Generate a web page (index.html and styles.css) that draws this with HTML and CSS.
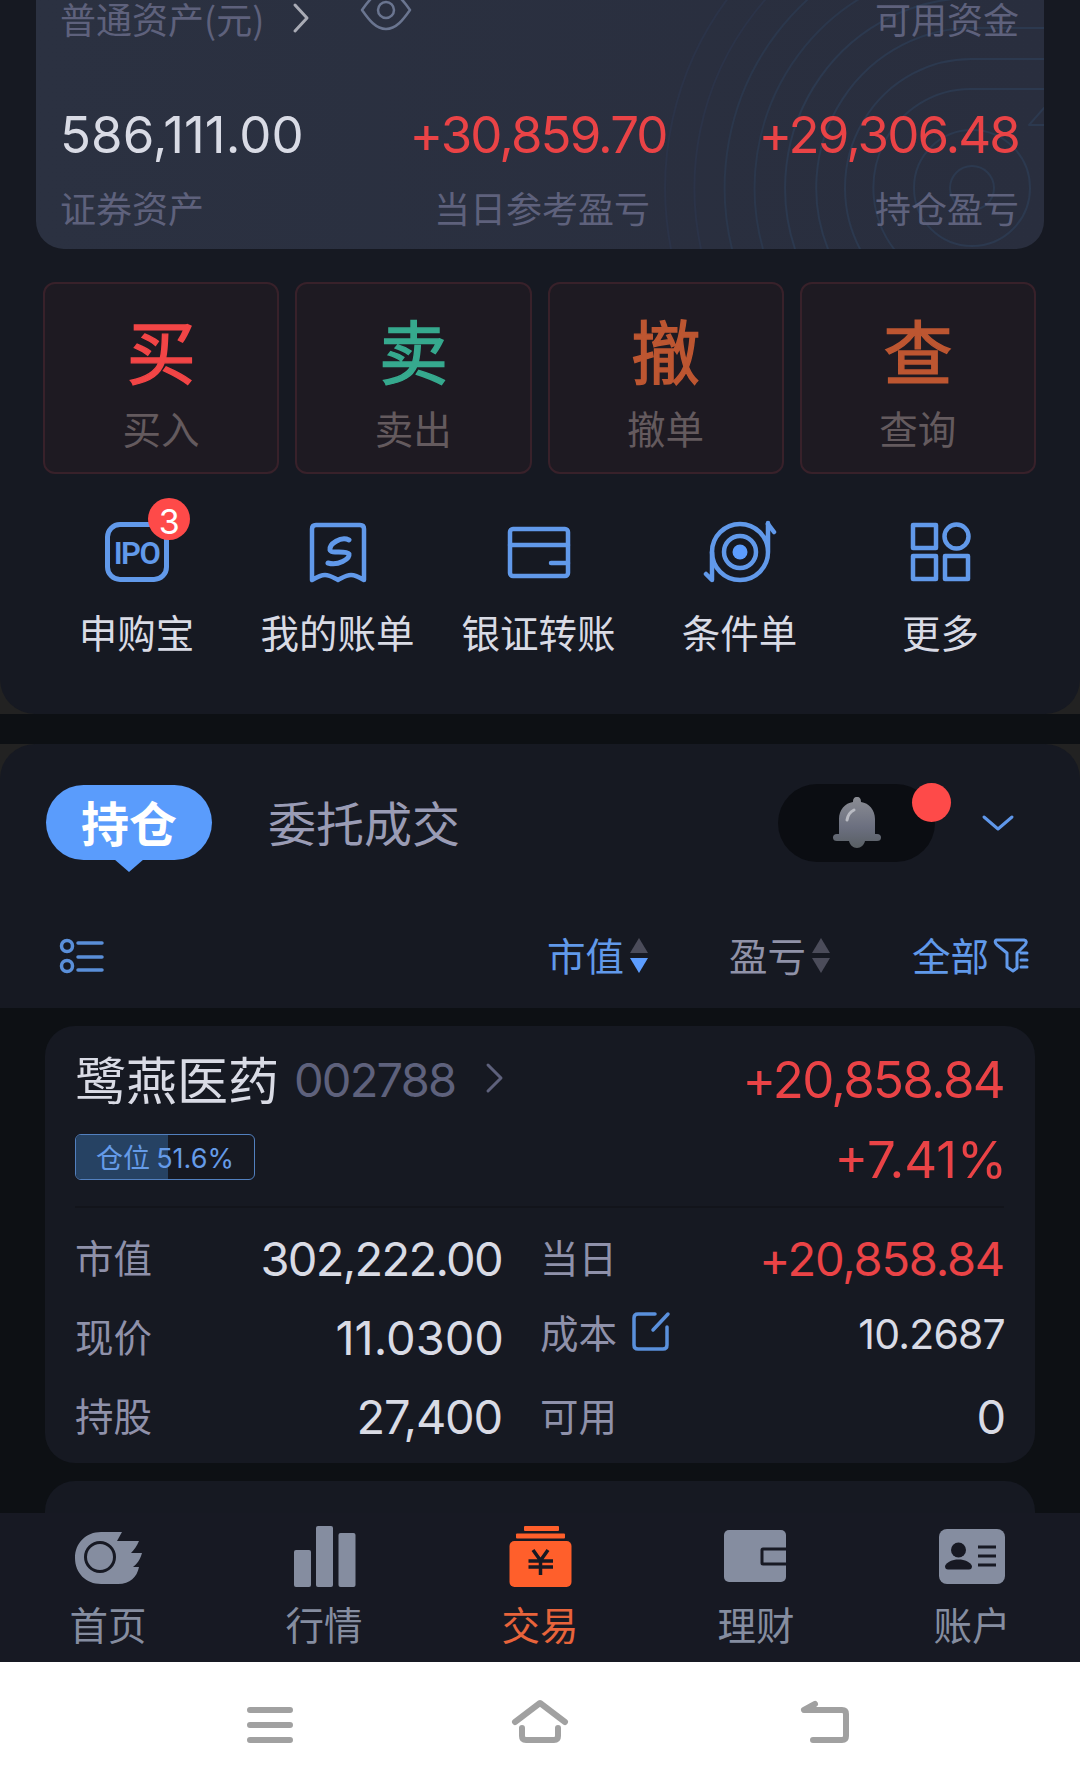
FILE: index.html
```html
<!DOCTYPE html>
<html lang="zh-CN">
    <head>
        <meta charset="UTF-8">
        <meta name="viewport" content="width=device-width, initial-scale=1.0">
        <title>交易</title>
        <link rel="stylesheet" href="styles.css">
    </head>
    <body>
        <section class="account">
            <div class="assets">
                <svg class="rings" width="400" height="249" viewBox="644 0 400 249">
                    <circle cx="972" cy="188" r="22"/>
                    <circle cx="972" cy="188" r="58"/>
                    <path d="M1044 89H972A97 99 0 0 0 894 249"/>
                    <path d="M1044 59H972A126 129 0 0 0 860 249"/>
                    <path d="M1044 28H972A156 160 0 0 0 828 249"/>
                    <path d="M972 -2A187 190 0 0 0 795 249"/>
                    <path class="dim" d="M972 -33A217 221 0 0 0 763 249"/>
                    <path class="dim" d="M972 -64A247 252 0 0 0 732 249"/>
                    <path class="faint" d="M972 -94A277 282 0 0 0 701 249"/>
                    <path class="faint" d="M972 -125A307 313 0 0 0 671 249"/>
                    <path d="M1044 108L1029 125H1044"/>
                </svg>
                <div class="assets-head">
                    <span>普通资产(元)</span>
                    <svg class="go" width="18" height="32" viewBox="0 0 18 32"><path d="M3 3L15 16L3 29"/></svg>
                    <svg class="eye" width="54" height="44" viewBox="0 0 54 44"><path d="M3 22C10 12 18 2 27 2S44 12 51 22C44 32 37 41 27 41S10 32 3 22Z"/><circle cx="27" cy="22" r="8"/></svg>
                    <span class="right">可用资金</span>
                </div>
                <div class="assets-row">
                    <div>
                        <div class="num">586,111.00</div>
                        <div class="cap">证券资产</div>
                    </div>
                    <div class="mid">
                        <div class="num up">+30,859.70</div>
                        <div class="cap">当日参考盈亏</div>
                    </div>
                    <div class="end">
                        <div class="num up">+29,306.48</div>
                        <div class="cap">持仓盈亏</div>
                    </div>
                </div>
            </div>
            <div class="actions">
                <div class="action buy"><b>买</b><span>买入</span></div>
                <div class="action sell"><b>卖</b><span>卖出</span></div>
                <div class="action"><b>撤</b><span>撤单</span></div>
                <div class="action"><b>查</b><span>查询</span></div>
            </div>
            <div class="tools">
                <div class="tool">
                    <div class="ipo">IPO<span class="badge">3</span></div>
                    <span>申购宝</span>
                </div>
                <div class="tool">
                    <svg width="72" height="64" viewBox="0 0 72 64">
                        <path d="M10 60V9Q10 5 14 5H58Q62 5 62 9V60C57 57 53 55 49 55C44 55 40 58 36 60C32 58 28 55 23 55C19 55 15 57 10 60Z"/>
                        <path class="thick" d="M47 20C39 16 27 24 28 30C29 34 44 30 47 34C48 39 36 46 26 43"/>
                    </svg>
                    <span>我的账单</span>
                </div>
                <div class="tool">
                    <svg width="72" height="64" viewBox="0 0 72 64">
                        <rect x="7" y="9" width="58" height="47" rx="3"/>
                        <path d="M7 25H65M48 43H65"/>
                    </svg>
                    <span>银证转账</span>
                </div>
                <div class="tool">
                    <svg width="76" height="64" viewBox="0 0 76 64">
                        <path d="M66 3V32A28 28 0 0 1 10 32A28 28 0 0 1 66 32"/>
                        <path d="M66 4L72 12M10 32V60L4 54"/>
                        <circle cx="38" cy="32" r="16"/>
                        <circle class="solid" cx="38" cy="32" r="7.5"/>
                    </svg>
                    <span>条件单</span>
                </div>
                <div class="tool">
                    <svg width="72" height="64" viewBox="0 0 72 64">
                        <rect x="8" y="5" width="23" height="23"/>
                        <circle cx="51.500" cy="16.500" r="12"/>
                        <rect x="8" y="36" width="23" height="23"/>
                        <rect x="40" y="36" width="23" height="23"/>
                    </svg>
                    <span>更多</span>
                </div>
            </div>
        </section>
        <div class="gap"></div>
        <section class="positions">
            <div class="tabs">
                <div class="tab active">持仓</div>
                <div class="tab">委托成交</div>
                <div class="bell">
                    <svg width="50" height="56" viewBox="0 0 50 56">
                        <defs>
                            <linearGradient id="metal" x1="0" y1="0" x2="0" y2="1">
                                <stop offset="0" stop-color="#8b8d94"/>
                                <stop offset="0.6" stop-color="#6b6f7f"/>
                                <stop offset="1" stop-color="#595f64"/>
                            </linearGradient>
                        </defs>
                        <path fill="url(#metal)" d="M25 2C28 2 29 4 29 7C37 8 43 15 43 24V39H45Q49 39 49 42.500T45 46H33C32 50 29 53 25 53S18 50 17 46H5Q1 46 1 42.500T5 39H7V24C7 15 13 8 21 7C21 4 22 2 25 2Z"/>
                        <path class="shine" d="M15 25Q16 18 22 15"/>
                    </svg>
                    <i class="dot"></i>
                </div>
                <svg class="fold" width="34" height="20" viewBox="0 0 34 20"><path d="M3 4L17 16L31 4"/></svg>
            </div>
            <div class="filters">
                <svg class="list" width="46" height="38" viewBox="0 0 46 38">
                    <circle cx="9" cy="9" r="5.500"/>
                    <circle cx="9" cy="29" r="5.500"/>
                    <path d="M20 6H44M20 20H44M20 33H44"/>
                </svg>
                <div class="filter on"><span>市值</span><svg width="18" height="36" viewBox="0 0 18 36"><path d="M9 0L18 15H0Z"/><path class="sel" d="M0 20H18L9 35Z"/></svg></div>
                <div class="filter"><span>盈亏</span><svg width="18" height="36" viewBox="0 0 18 36"><path d="M9 0L18 15H0Z"/><path d="M0 20H18L9 35Z"/></svg></div>
                <div class="filter on all"><span>全部</span><svg class="funnel" width="36" height="38" viewBox="0 0 36 38"><path d="M3 3H31Q35 4 32 8L24 16V31L20 34L14 30V16L4 8Q1 5 3 3ZM28 16H34M28 23H34M28 30H34"/></svg></div>
            </div>
        </section>
        <main class="holdings">
            <article class="stock">
                <div class="stock-head">
                    <div>
                        <div class="name">鹭燕医药 <span class="code">002788</span>
                            <svg width="20" height="32" viewBox="0 0 20 32"><path d="M3 3L16 16L3 29"/></svg>
                        </div>
                        <div class="weight"><i style="width:51.600%"></i><span>仓位 <em>51.6%</em></span></div>
                    </div>
                    <div class="profit">
                        <div>+20,858.84</div>
                        <div class="rate">+7.41%</div>
                    </div>
                </div>
                <div class="grid">
                    <label>市值</label><div class="val tight">302,222.00</div>
                    <label>当日</label><div class="val up">+20,858.84</div>
                    <label>现价</label><div class="val loose">11.0300</div>
                    <label class="cost">成本<svg width="40" height="40" viewBox="0 0 40 40"><path d="M24 3H7Q3 3 3 7V34Q3 38 7 38H32Q36 38 36 34V16M22 19L37 3"/></svg></label><div class="val small">10.2687</div>
                    <label>持股</label><div class="val">27,400</div>
                    <label>可用</label><div class="val">0</div>
                </div>
            </article>
            <article class="stock next"></article>
        </main>
        <nav class="tabbar">
            <a>
                <svg width="72" height="66" viewBox="0 0 72 66">
                    <path d="M29 10H50L45 19H67C65 24 62 28 59 31H70C68 38 65 42 61 45H67C65 55 58 62 46 62H29C14 62 3 51 3 36S14 10 29 10Z"/>
                    <circle class="cut" cx="28" cy="35" r="14.500"/>
                </svg>
                <span>首页</span>
            </a>
            <a>
                <svg width="72" height="66" viewBox="0 0 72 66">
                    <rect x="6" y="28" width="17" height="37" rx="2"/>
                    <rect x="28" y="4" width="17" height="61" rx="2"/>
                    <rect x="50.500" y="11" width="17" height="54" rx="2"/>
                </svg>
                <span>行情</span>
            </a>
            <a class="on">
                <svg width="72" height="66" viewBox="0 0 72 66">
                    <rect x="20" y="4" width="35" height="5" rx="1"/>
                    <rect x="12" y="11.500" width="49" height="5" rx="1"/>
                    <rect x="5.500" y="19" width="62" height="46" rx="5"/>
                    <path class="cut" d="M29 28L36.500 38.500L44 28M24.500 39H49M24.500 45H49M36.500 39V53"/>
                </svg>
                <span>交易</span>
            </a>
            <a>
                <svg width="72" height="66" viewBox="0 0 72 66">
                    <rect x="4" y="8" width="62" height="52" rx="5"/>
                    <path class="cut" d="M66 27H43Q42 27 42 28V41Q42 42 43 42H66"/>
                </svg>
                <span>理财</span>
            </a>
            <a>
                <svg width="72" height="66" viewBox="0 0 72 66">
                    <rect x="3" y="7" width="66" height="55" rx="8"/>
                    <circle class="hole" cx="22.500" cy="28" r="7.500"/>
                    <path class="hole" d="M12 47.500Q9 47.500 9 44C11 40 16 37.500 22.500 37.500S34 40 36 44Q36 47.500 33 47.500Z"/>
                    <path class="cut" d="M42 25H60M42 34H60M42 43H60"/>
                </svg>
                <span>账户</span>
            </a>
        </nav>
        <footer class="sysbar">
            <svg width="60" height="56" viewBox="0 0 60 56"><path d="M10 13H50M10 28H50M10 43H50"/></svg>
            <svg width="60" height="56" viewBox="0 0 60 56"><path d="M5 25L30 6L55 25M12 31V39Q12 43 16 43H44Q48 43 48 39V31"/></svg>
            <svg width="60" height="56" viewBox="0 0 60 56"><path d="M19 7L8 13H46Q50 13 50 17V39Q50 43 46 43H17"/></svg>
        </footer>
    </body>
</html>
```

FILE: styles.css
```css
* {box-sizing:border-box;}
body {
    margin:0;
    width:1080px;
    height:1788px;
    overflow:hidden;
    display:flex;
    flex-direction:column;
    background-color:#222222;
    color:#d9dbe5;
    font-family:"Noto Sans CJK SC", sans-serif;
    font-size:38.5px;
}
svg {
    display:block;
    flex-shrink:0;
    fill:none;
    stroke-linecap:round;
    stroke-linejoin:round;
}
.num, .val, .profit, .code, .badge, .weight em {
    font-family:Inter, sans-serif;
    font-style:normal;
}

/* account summary */
.account {
    height:714px;
    flex-shrink:0;
    padding:0 36px;
    background-color:#161922;
    border-radius:0 0 35px 35px;
}
.assets {
    position:relative;
    height:249px;
    padding:0 25px 0 24px;
    background:linear-gradient(90deg, #2b3141, #292e3e);
    border-radius:0 0 28px 28px;
    color:#5e617c;
    font-size:36px;
    overflow:hidden;
}
.rings {
    position:absolute;
    right:0;
    top:0;
    stroke:#2c394f;
    stroke-width:2;
}
.rings .dim {stroke:#2b374c;}
.rings .faint {stroke:#2b3348;}
.assets-head {
    position:relative;
    display:flex;
    align-items:center;
    height:36px;
}
.go {
    margin-left:28px;
    stroke:#a9abb5;
    stroke-width:3;
}
.eye {
    margin:-16px 0 0 49px;
    stroke:#6a7590;
    stroke-width:2.5;
}
.right {margin-left:auto;}
.assets-row {
    position:relative;
    display:grid;
    grid-template-columns:1fr auto 1fr;
    margin-top:69px;
}
.mid {text-align:center;}
.mid .num {margin-left:-3px;}
.mid .cap {padding-left:5px;}
.end {text-align:right;}
.num {
    line-height:60px;
    font-size:51px;
    letter-spacing:0.1px;
    color:#d9dbe5;
}
.num.up {
    color:#ea4346;
    letter-spacing:-1.9px;
}
.cap {
    line-height:40px;
    margin-top:22px;
}

/* buy, sell, cancel, query */
.actions {
    display:grid;
    grid-template-columns:repeat(4, 1fr);
    gap:16px;
    margin:33px 8px 0 7px;
}
.action {
    display:flex;
    flex-direction:column;
    align-items:center;
    height:192px;
    padding-top:23px;
    border:2px solid #38212a;
    border-radius:12px;
    background-color:#1e1a22;
    color:#645a5e;
}
.action b {
    height:84px;
    line-height:84px;
    font-size:69px;
    font-weight:400;
    color:#bd5631;
    -webkit-text-stroke:1.4px #bd5631;
}
.buy b {
    color:#f24546;
    -webkit-text-stroke-color:#f24546;
}
.sell b {
    color:#36a98e;
    -webkit-text-stroke-color:#36a98e;
}
.action span {
    line-height:46px;
    margin-top:13px;
}

/* shortcuts */
.tools {
    display:grid;
    grid-template-columns:repeat(5, 1fr);
    margin:46px 3px 0 0;
}
.tool {
    display:flex;
    flex-direction:column;
    align-items:center;
    white-space:nowrap;
}
.tool > svg {
    height:64px;
    stroke:#6199ea;
    stroke-width:4.5;
}
.tool .thick {stroke-width:5;}
.tool .solid {
    fill:#5c9dff;
    stroke:none;
}
.tool > span {
    line-height:50px;
    margin-top:22px;
}
.ipo {
    position:relative;
    width:64px;
    height:60px;
    margin:2px 0;
    border:5px solid #6199ea;
    border-radius:15px;
    text-align:center;
    line-height:53px;
    font-family:Roboto, sans-serif;
    font-size:31px;
    font-weight:600;
    letter-spacing:-1.5px;
    color:#6199ea;
}
.badge {
    position:absolute;
    left:38px;
    top:-29px;
    width:42px;
    height:42px;
    border-radius:50%;
    background-color:#fe4a49;
    color:white;
    line-height:48px;
    font-size:34px;
    font-weight:400;
}

.gap {
    height:30px;
    flex-shrink:0;
    background-color:#0d1014;
}

/* positions header */
.positions {
    height:264px;
    flex-shrink:0;
    background-color:#161922;
    border-radius:35px 35px 0 0;
}
.tabs {
    display:flex;
    align-items:center;
    height:78px;
    margin:40px 67px 0 46px;
}
.tab {
    font-size:48px;
    line-height:73px;
    margin-top:-3px;
    color:#9a9cb5;
}
.tab.active {
    position:relative;
    width:166px;
    height:75px;
    margin:-1px 56px 0 0;
    border-radius:38px;
    background-color:#5a9cfc;
    color:white;
    font-weight:700;
    text-align:center;
}
.tab.active::after {
    content:"";
    position:absolute;
    left:68px;
    top:74px;
    border:15px solid transparent;
    border-top:13px solid #5a9cfc;
    border-bottom:0;
}
.bell {
    position:relative;
    display:flex;
    justify-content:center;
    align-items:center;
    width:157px;
    height:78px;
    margin-left:auto;
    border-radius:39px;
    background-color:#0b0d12;
}
.bell .shine {
    stroke:#b9bbc3;
    stroke-width:3;
}
.dot {
    position:absolute;
    right:-16px;
    top:-1px;
    width:39px;
    height:39px;
    border-radius:50%;
    background-color:#fe4a49;
}
.fold {
    margin:0 -2px 0 46px;
    stroke:#5f97ea;
    stroke-width:3;
}
.filters {
    display:flex;
    align-items:center;
    height:50px;
    margin:69px 51px 0 58px;
}
.list {
    stroke:#5a8fd9;
    stroke-width:3.5;
    margin-right:443px;
}
.filter {
    display:flex;
    align-items:center;
    margin-right:81px;
    color:#9092a8;
}
.filter span {
    line-height:48px;
    margin-top:-4px;
}
.filter svg {
    margin-left:6px;
    fill:#4b4c5a;
}
.filter.on {color:#6199ea;}
.filter .sel {fill:#5c9dff;}
.filter.all {margin:0 0 0 auto;}
.filter .funnel {
    margin-left:4px;
    fill:none;
    stroke:#6199ea;
    stroke-width:3;
}

/* holdings */
.holdings {
    height:505px;
    flex-shrink:0;
    padding:18px 45px 0;
    background-color:#0d1014;
    overflow:hidden;
}
.stock {
    height:437px;
    padding:19px 31px 0 30px;
    border-radius:30px;
    background-color:#161922;
}
.next {margin-top:18px;}
.stock-head {
    display:flex;
    justify-content:space-between;
    height:163px;
    border-bottom:2px solid #12141b;
}
.name {
    display:flex;
    align-items:center;
    height:66px;
    font-size:51px;
}
.code {
    margin:3px 0 0 15px;
    font-size:47px;
    letter-spacing:-1.8px;
    color:#5e617c;
}
.name svg {
    margin:0 0 0 30px;
    stroke:#5e617c;
    stroke-width:3;
}
.weight {
    position:relative;
    width:180px;
    height:46px;
    margin-top:23px;
    border:1.5px solid #5280bf;
    border-radius:6px;
    overflow:hidden;
    text-align:center;
    line-height:43px;
    font-size:27px;
    color:#659be8;
}
.weight i {
    position:absolute;
    left:0;
    top:0;
    height:100%;
    background-color:#264263;
}
.weight span {position:relative;}
.profit {
    text-align:right;
    color:#ea4346;
    font-size:51px;
    letter-spacing:-1.7px;
    line-height:80px;
    margin-top:-5px;
}
.profit .rate {
    letter-spacing:0;
    margin-right:-3px;
}
.grid {
    display:grid;
    grid-template-columns:112px 314px 110px 1fr;
    grid-auto-rows:79px;
    align-items:center;
    margin-top:11px;
    color:#8f91aa;
}
.grid label {
    margin-top:-6px;
    white-space:nowrap;
}
.grid label:nth-child(4n+3) {margin-left:39px;}
.val {
    text-align:right;
    font-size:47px;
    letter-spacing:-1.2px;
    margin-right:-1px;
    color:#d9dbe5;
}
.val.up {
    margin-right:0;
    color:#ea4346;
}
.val.tight {letter-spacing:-1.7px;}
.val.loose {
    letter-spacing:0;
    margin-right:-3px;
}
.val.small {
    font-size:41px;
    letter-spacing:-0.8px;
    margin-top:-8px;
}
.grid .cost {
    display:flex;
    align-items:center;
    margin-top:-14px;
}
.cost svg {
    margin:0 0 0 14px;
    stroke:#5a90dc;
    stroke-width:3.5;
}

/* bottom tabs */
.tabbar {
    display:grid;
    grid-template-columns:repeat(5, 1fr);
    height:149px;
    flex-shrink:0;
    padding-top:9px;
    background-color:#171923;
    color:#858da0;
}
.tabbar a {
    display:flex;
    flex-direction:column;
    align-items:center;
}
.tabbar svg {fill:#858da0;}
.tabbar span {
    line-height:50px;
    margin-top:10px;
}
.tabbar .cut {
    fill:none;
    stroke:#171923;
    stroke-width:3;
    stroke-linecap:butt;
}
.tabbar .hole {fill:#171923;}
.tabbar .on {color:#e8643b;}
.tabbar .on svg {fill:#ff5f2b;}
.tabbar .on .cut {stroke-width:3.5;}

.sysbar {
    display:flex;
    gap:210px;
    height:126px;
    flex-shrink:0;
    padding:35px 0 0 240px;
    background-color:white;
}
.sysbar svg {
    stroke:#a1a1a1;
    stroke-width:6;
}
.sysbar svg:last-child {margin-left:16px;}
```
